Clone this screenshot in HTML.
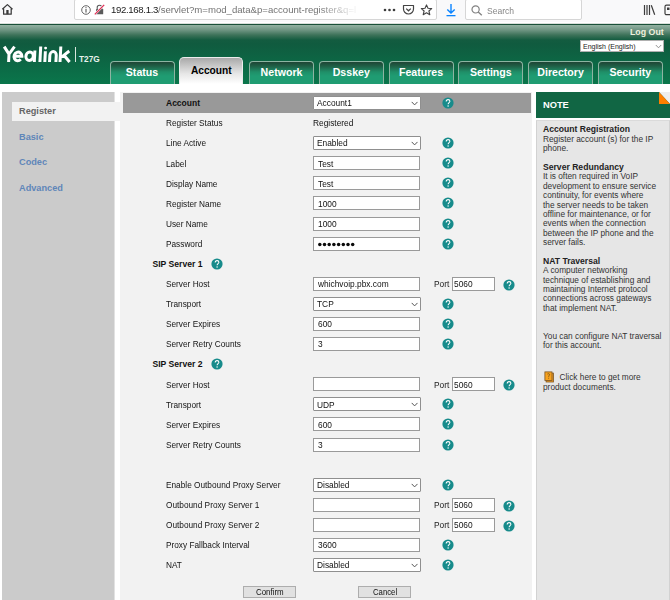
<!DOCTYPE html><html><head><meta charset="utf-8"><style>
*{box-sizing:border-box}
html,body{margin:0;padding:0}
body{width:670px;height:600px;overflow:hidden;position:relative;background:#fff;font-family:"Liberation Sans",sans-serif}
.a{position:absolute}
.t{position:absolute;white-space:nowrap;line-height:1}
.lbl{font-size:8.8px;color:#141414;transform:scaleX(0.94);transform-origin:0 0}
.inp{position:absolute;background:#fff;border:1px solid #9a9a9a;height:14px}
.sel{position:absolute;background:#fff;border:1px solid #8f8f8f;height:14px;border-radius:1px}
.it{position:absolute;white-space:nowrap;line-height:1;font-size:8.8px;color:#111;transform:scaleX(0.95);transform-origin:0 0}
.tab{position:absolute;top:61px;width:65px;height:23px;border:1px solid #8db4a2;border-bottom:none;border-radius:4px 4px 0 0;
 background:linear-gradient(#1e4535 0px,#1f5e45 4px,#1f8f68 10px,#1f9c72 14px,#1f9c72 100%)}
.tabt{position:absolute;left:0;right:0;top:5.2px;text-align:center;font-weight:bold;font-size:10.6px;color:#fff;line-height:1}
.tabt.act{font-size:10.2px}
.nt{position:absolute;left:543px;white-space:nowrap;font-size:8.3px;line-height:9.3px;color:#333}
</style></head><body><div class="a" style="left:0;top:0;width:670px;height:22px;background:#f9f9fa"></div>
<div class="a" style="left:0;top:23px;width:670px;height:1px;background:#d9dfdb"></div>
<svg class="a" style="left:0;top:0" width="16" height="18" viewBox="0 0 16 18"><path d="M2.3 9.2 L7.4 4.6 L12.5 9.2 M3.6 8 V14.2 H11.2 V8" fill="none" stroke="#3a3a3a" stroke-width="1.25" stroke-linejoin="round"/><rect x="6.3" y="10" width="2.3" height="4.2" fill="#3a3a3a"/></svg>
<div class="a" style="left:74px;top:-1px;width:363px;height:21px;background:#fff;border:1px solid #d6d6d6;border-radius:2px"></div>
<svg class="a" style="left:81px;top:5px" width="10" height="10" viewBox="0 0 10 10"><circle cx="5" cy="5" r="4.3" fill="none" stroke="#555" stroke-width="0.9"/><rect x="4.45" y="4" width="1.1" height="3.6" fill="#555"/><circle cx="5" cy="2.7" r="0.6" fill="#555"/></svg>
<svg class="a" style="left:94px;top:4px" width="11" height="11" viewBox="0 0 11 11"><path d="M3.2 5 V3.6 A2.3 2.3 0 0 1 7.8 3.6 V5" fill="none" stroke="#5a5a5a" stroke-width="1.1"/><rect x="2" y="5" width="7.2" height="5.3" rx="0.6" fill="#5a5a5a"/><path d="M0.8 10.3 L10.2 0.8" stroke="#f9f9fa" stroke-width="2.2"/><path d="M0.8 10.3 L10.2 0.8" stroke="#e22850" stroke-width="1.2"/></svg>
<div class="t" style="left:111px;top:5px;font-size:9.6px;line-height:10px;color:#1b1b1b;width:252px;overflow:hidden;-webkit-mask-image:linear-gradient(90deg,#000 205px,rgba(0,0,0,0.12) 242px,transparent 252px)"><span style="letter-spacing:-0.33px">192.168.1.3</span><span style="color:#737373">/servlet?m=mod_data&amp;p=account-register&amp;q=l</span></div>
<svg class="a" style="left:383px;top:8px" width="13" height="4" viewBox="0 0 13 4"><circle cx="2" cy="2" r="1.3" fill="#3c3c3c"/><circle cx="6.5" cy="2" r="1.3" fill="#3c3c3c"/><circle cx="11" cy="2" r="1.3" fill="#3c3c3c"/></svg>
<svg class="a" style="left:402px;top:4px" width="13" height="12" viewBox="0 0 13 12"><path d="M1.5 1.5 H11.5 V5 A5 5 0 0 1 1.5 5 Z" fill="none" stroke="#444" stroke-width="1.2" stroke-linejoin="round"/><path d="M4.2 4.6 L6.5 6.8 L8.8 4.6" fill="none" stroke="#444" stroke-width="1.2"/></svg>
<svg class="a" style="left:420px;top:4px" width="13" height="12" viewBox="0 0 13 12"><path d="M6.5 0.9 L8 4.3 L11.7 4.6 L8.9 7 L9.8 10.7 L6.5 8.7 L3.2 10.7 L4.1 7 L1.3 4.6 L5 4.3 Z" fill="none" stroke="#444" stroke-width="1.1" stroke-linejoin="round"/></svg>
<svg class="a" style="left:445px;top:3px" width="12" height="14" viewBox="0 0 12 14"><path d="M6 1 V10 M2.3 6.4 L6 10 L9.7 6.4" fill="none" stroke="#0a84ff" stroke-width="1.4"/><rect x="1.5" y="12" width="9" height="1.3" fill="#0a84ff"/></svg>
<div class="a" style="left:465px;top:-1px;width:117px;height:21px;background:#fff;border:1px solid #d6d6d6;border-radius:2px"></div>
<svg class="a" style="left:470.5px;top:5px" width="12" height="11" viewBox="0 0 12 11"><circle cx="4.6" cy="4.4" r="3.6" fill="none" stroke="#808080" stroke-width="1.2"/><path d="M7.2 7 L10.8 10.3" stroke="#808080" stroke-width="1.3"/></svg>
<div class="t" style="left:486.5px;top:6px;font-size:9.2px;line-height:10px;color:#858585;transform:scaleX(0.93);transform-origin:0 0">Search</div>
<svg class="a" style="left:643px;top:4px" width="13" height="12" viewBox="0 0 13 12"><path d="M1.5 1 V11 M4 1 V11 M6.5 1 V11 M8.3 1.2 L11.7 10.8" stroke="#3c3c3c" stroke-width="1.2" fill="none"/></svg>
<svg class="a" style="left:663px;top:4px" width="8" height="12" viewBox="0 0 8 12"><rect x="2" y="1.2" width="9" height="9.5" rx="1.5" fill="none" stroke="#3c3c3c" stroke-width="1.2"/><rect x="4" y="3.5" width="2.5" height="2.5" fill="#3c3c3c"/></svg>
<div class="a" style="left:0;top:24px;width:670px;height:60px;background:linear-gradient(#1a5038 0px,#1a5038 1px,#93b2a2 1px,#6f9583 6px,#3d7259 11px,#135c40 16px,#105b3f 20px,#0c6845 40px,#0a764b 60px)"></div>
<svg class="a" style="left:0;top:40px" width="74" height="26" viewBox="0 40 74 26"><g fill="none" stroke="#fff" stroke-width="3" transform="translate(0 62) skewX(-3) translate(0 -62)"><path d="M3.4 46.6 L8.6 54 L13.7 46.6 M8.6 53.4 V61.9" stroke-linejoin="miter"/><path d="M13.9 56.2 H21.6 A3.95 4.3 0 1 0 20.6 59.3"/><ellipse cx="29.3" cy="56.3" rx="3.7" ry="4.2"/><path d="M34.3 50.6 V61.9"/><path d="M39.9 46.4 V61.9 M44.8 51.2 V61.9 M49.5 61.9 V55.2 A3.2 3.6 0 0 1 55.9 55.2 V61.9 M60.0 46.4 V61.9 M68.7 51.0 L61.3 57.2 M63.6 55.2 L69.6 61.9"/></g><circle cx="45.6" cy="48.1" r="1.45" fill="#fff"/></svg>
<div class="a" style="left:75px;top:47px;width:1px;height:15px;background:#d8e6de"></div>
<div class="t" style="left:79px;top:55px;font-size:8.3px;font-weight:bold;color:#e8f2ec">T27G</div>
<div class="t" style="left:630px;top:28px;font-size:8.8px;font-weight:bold;color:#eef0dc">Log Out</div>
<div class="a" style="left:580px;top:40px;width:84px;height:12px;background:#fff;border:1px solid #b0b0b0"></div>
<div class="t" style="left:583px;top:43px;font-size:7px;color:#222">English (English)</div>
<svg class="a" style="left:655px;top:44px" width="7" height="5" viewBox="0 0 7 5"><path d="M0.8 1 L3.5 3.8 L6.2 1" fill="none" stroke="#888" stroke-width="0.9"/></svg>
<div class="tab" style="left:109.50px"><div class="tabt">Status</div></div>
<div class="a" style="left:179.26px;top:57px;width:64px;height:27px;border:1px solid #ececec;border-bottom:none;border-radius:5px 5px 0 0;background:linear-gradient(#a9a9a9,#e6e6e6 60%,#fff)"><div class="tabt act" style="top:8px;color:#000">Account</div></div>
<div class="tab" style="left:249.02px"><div class="tabt">Network</div></div>
<div class="tab" style="left:318.78px"><div class="tabt">Dsskey</div></div>
<div class="tab" style="left:388.54px"><div class="tabt">Features</div></div>
<div class="tab" style="left:458.30px"><div class="tabt">Settings</div></div>
<div class="tab" style="left:528.06px"><div class="tabt">Directory</div></div>
<div class="tab" style="left:597.82px"><div class="tabt">Security</div></div>
<div class="a" style="left:2px;top:92px;width:112px;height:508px;background:#cbcbcb;box-shadow:1px 0 0 #e2e2e2"></div>
<div class="a" style="left:120px;top:92px;width:412px;height:508px;background:#f2f2f2"></div>
<div class="a" style="left:12px;top:102px;width:112px;height:19px;background:#f2f2f2"></div>
<div class="t" style="left:19px;top:107px;font-size:9.2px;font-weight:bold;color:#666">Register</div>
<div class="t" style="left:19px;top:132.5px;font-size:9.2px;font-weight:bold;color:#5f86b9">Basic</div>
<div class="t" style="left:19px;top:158.0px;font-size:9.2px;font-weight:bold;color:#5f86b9">Codec</div>
<div class="t" style="left:19px;top:183.5px;font-size:9.2px;font-weight:bold;color:#5f86b9">Advanced</div>
<div class="a" style="left:123px;top:93px;width:408px;height:20px;background:#999"></div>
<div class="t" style="left:166px;top:99.25px;font-size:8.5px;font-weight:bold;color:#111">Account</div>
<div class="sel" style="left:313px;top:96px;width:108px"></div>
<div class="it" style="left:317px;top:99.25px">Account1</div>
<svg class="a" style="left:411.00px;top:101.30px" width="7" height="5" viewBox="0 0 7 5"><path d="M0.7 0.9 L3.6 3.9 L6.5 0.9" fill="none" stroke="#555" stroke-width="1"/></svg>
<svg class="a" style="left:441.60px;top:97.00px" width="12" height="12" viewBox="0 0 12 12"><circle cx="6" cy="6" r="5.6" fill="#178b8b"/><path d="M4.2 4.6 C4.2 3.4 5 2.6 6.1 2.6 C7.1 2.6 7.9 3.3 7.9 4.3 C7.9 5.6 6.1 5.7 6.1 7.3" fill="none" stroke="#fff" stroke-width="1.05"/><circle cx="6.1" cy="9" r="0.7" fill="#fff"/></svg>
<div class="t lbl" style="left:166px;top:119.34px">Register Status</div>
<div class="it" style="left:313px;top:119.34px">Registered</div>
<div class="t lbl" style="left:166px;top:139.43px">Line Active</div>
<div class="sel" style="left:313px;top:136px;width:108px"></div>
<div class="it" style="left:317px;top:139.43px">Enabled</div>
<svg class="a" style="left:411.00px;top:141.30px" width="7" height="5" viewBox="0 0 7 5"><path d="M0.7 0.9 L3.6 3.9 L6.5 0.9" fill="none" stroke="#555" stroke-width="1"/></svg>
<svg class="a" style="left:441.60px;top:137.18px" width="12" height="12" viewBox="0 0 12 12"><circle cx="6" cy="6" r="5.6" fill="#178b8b"/><path d="M4.2 4.6 C4.2 3.4 5 2.6 6.1 2.6 C7.1 2.6 7.9 3.3 7.9 4.3 C7.9 5.6 6.1 5.7 6.1 7.3" fill="none" stroke="#fff" stroke-width="1.05"/><circle cx="6.1" cy="9" r="0.7" fill="#fff"/></svg>
<div class="t lbl" style="left:166px;top:159.52px">Label</div>
<div class="inp" style="left:313px;top:156px;width:107px"></div>
<div class="it" style="left:317.5px;top:159.52px">Test</div>
<svg class="a" style="left:441.60px;top:157.27px" width="12" height="12" viewBox="0 0 12 12"><circle cx="6" cy="6" r="5.6" fill="#178b8b"/><path d="M4.2 4.6 C4.2 3.4 5 2.6 6.1 2.6 C7.1 2.6 7.9 3.3 7.9 4.3 C7.9 5.6 6.1 5.7 6.1 7.3" fill="none" stroke="#fff" stroke-width="1.05"/><circle cx="6.1" cy="9" r="0.7" fill="#fff"/></svg>
<div class="t lbl" style="left:166px;top:179.61px">Display Name</div>
<div class="inp" style="left:313px;top:176px;width:107px"></div>
<div class="it" style="left:317.5px;top:179.61px">Test</div>
<svg class="a" style="left:441.60px;top:177.36px" width="12" height="12" viewBox="0 0 12 12"><circle cx="6" cy="6" r="5.6" fill="#178b8b"/><path d="M4.2 4.6 C4.2 3.4 5 2.6 6.1 2.6 C7.1 2.6 7.9 3.3 7.9 4.3 C7.9 5.6 6.1 5.7 6.1 7.3" fill="none" stroke="#fff" stroke-width="1.05"/><circle cx="6.1" cy="9" r="0.7" fill="#fff"/></svg>
<div class="t lbl" style="left:166px;top:199.70px">Register Name</div>
<div class="inp" style="left:313px;top:196px;width:107px"></div>
<div class="it" style="left:317.5px;top:199.70px">1000</div>
<svg class="a" style="left:441.60px;top:197.45px" width="12" height="12" viewBox="0 0 12 12"><circle cx="6" cy="6" r="5.6" fill="#178b8b"/><path d="M4.2 4.6 C4.2 3.4 5 2.6 6.1 2.6 C7.1 2.6 7.9 3.3 7.9 4.3 C7.9 5.6 6.1 5.7 6.1 7.3" fill="none" stroke="#fff" stroke-width="1.05"/><circle cx="6.1" cy="9" r="0.7" fill="#fff"/></svg>
<div class="t lbl" style="left:166px;top:219.79px">User Name</div>
<div class="inp" style="left:313px;top:217px;width:107px"></div>
<div class="it" style="left:317.5px;top:219.79px">1000</div>
<svg class="a" style="left:441.60px;top:217.54px" width="12" height="12" viewBox="0 0 12 12"><circle cx="6" cy="6" r="5.6" fill="#178b8b"/><path d="M4.2 4.6 C4.2 3.4 5 2.6 6.1 2.6 C7.1 2.6 7.9 3.3 7.9 4.3 C7.9 5.6 6.1 5.7 6.1 7.3" fill="none" stroke="#fff" stroke-width="1.05"/><circle cx="6.1" cy="9" r="0.7" fill="#fff"/></svg>
<div class="t lbl" style="left:166px;top:239.88px">Password</div>
<div class="inp" style="left:313px;top:237px;width:107px"></div>
<svg class="a" style="left:317px;top:241.63px" width="40" height="5" viewBox="0 0 40 5"><circle cx="2.80" cy="2.5" r="1.75" fill="#0a0a0a"/><circle cx="7.50" cy="2.5" r="1.75" fill="#0a0a0a"/><circle cx="12.20" cy="2.5" r="1.75" fill="#0a0a0a"/><circle cx="16.90" cy="2.5" r="1.75" fill="#0a0a0a"/><circle cx="21.60" cy="2.5" r="1.75" fill="#0a0a0a"/><circle cx="26.30" cy="2.5" r="1.75" fill="#0a0a0a"/><circle cx="31.00" cy="2.5" r="1.75" fill="#0a0a0a"/><circle cx="35.70" cy="2.5" r="1.75" fill="#0a0a0a"/></svg>
<svg class="a" style="left:441.60px;top:237.63px" width="12" height="12" viewBox="0 0 12 12"><circle cx="6" cy="6" r="5.6" fill="#178b8b"/><path d="M4.2 4.6 C4.2 3.4 5 2.6 6.1 2.6 C7.1 2.6 7.9 3.3 7.9 4.3 C7.9 5.6 6.1 5.7 6.1 7.3" fill="none" stroke="#fff" stroke-width="1.05"/><circle cx="6.1" cy="9" r="0.7" fill="#fff"/></svg>
<div class="t" style="left:152.5px;top:259.97px;font-size:8.6px;font-weight:bold;color:#111">SIP Server 1</div>
<svg class="a" style="left:211.00px;top:257.52px" width="12" height="12" viewBox="0 0 12 12"><circle cx="6" cy="6" r="5.6" fill="#178b8b"/><path d="M4.2 4.6 C4.2 3.4 5 2.6 6.1 2.6 C7.1 2.6 7.9 3.3 7.9 4.3 C7.9 5.6 6.1 5.7 6.1 7.3" fill="none" stroke="#fff" stroke-width="1.05"/><circle cx="6.1" cy="9" r="0.7" fill="#fff"/></svg>
<div class="t lbl" style="left:166px;top:280.06px">Server Host</div>
<div class="inp" style="left:313px;top:277px;width:107px"></div>
<div class="it" style="left:317.5px;top:280.06px">whichvoip.pbx.com</div>
<div class="it" style="left:433.5px;top:280.06px;color:#1a1a1a">Port</div>
<div class="inp" style="left:452px;top:277px;width:43px"></div>
<div class="it" style="left:453.5px;top:280.06px">5060</div>
<svg class="a" style="left:502.50px;top:278.81px" width="12" height="12" viewBox="0 0 12 12"><circle cx="6" cy="6" r="5.6" fill="#178b8b"/><path d="M4.2 4.6 C4.2 3.4 5 2.6 6.1 2.6 C7.1 2.6 7.9 3.3 7.9 4.3 C7.9 5.6 6.1 5.7 6.1 7.3" fill="none" stroke="#fff" stroke-width="1.05"/><circle cx="6.1" cy="9" r="0.7" fill="#fff"/></svg>
<div class="t lbl" style="left:166px;top:300.15px">Transport</div>
<div class="sel" style="left:313px;top:297px;width:108px"></div>
<div class="it" style="left:317px;top:300.15px">TCP</div>
<svg class="a" style="left:411.00px;top:302.30px" width="7" height="5" viewBox="0 0 7 5"><path d="M0.7 0.9 L3.6 3.9 L6.5 0.9" fill="none" stroke="#555" stroke-width="1"/></svg>
<svg class="a" style="left:441.60px;top:297.90px" width="12" height="12" viewBox="0 0 12 12"><circle cx="6" cy="6" r="5.6" fill="#178b8b"/><path d="M4.2 4.6 C4.2 3.4 5 2.6 6.1 2.6 C7.1 2.6 7.9 3.3 7.9 4.3 C7.9 5.6 6.1 5.7 6.1 7.3" fill="none" stroke="#fff" stroke-width="1.05"/><circle cx="6.1" cy="9" r="0.7" fill="#fff"/></svg>
<div class="t lbl" style="left:166px;top:320.24px">Server Expires</div>
<div class="inp" style="left:313px;top:317px;width:107px"></div>
<div class="it" style="left:317.5px;top:320.24px">600</div>
<svg class="a" style="left:441.60px;top:317.99px" width="12" height="12" viewBox="0 0 12 12"><circle cx="6" cy="6" r="5.6" fill="#178b8b"/><path d="M4.2 4.6 C4.2 3.4 5 2.6 6.1 2.6 C7.1 2.6 7.9 3.3 7.9 4.3 C7.9 5.6 6.1 5.7 6.1 7.3" fill="none" stroke="#fff" stroke-width="1.05"/><circle cx="6.1" cy="9" r="0.7" fill="#fff"/></svg>
<div class="t lbl" style="left:166px;top:340.33px">Server Retry Counts</div>
<div class="inp" style="left:313px;top:337px;width:107px"></div>
<div class="it" style="left:317.5px;top:340.33px">3</div>
<svg class="a" style="left:441.60px;top:338.08px" width="12" height="12" viewBox="0 0 12 12"><circle cx="6" cy="6" r="5.6" fill="#178b8b"/><path d="M4.2 4.6 C4.2 3.4 5 2.6 6.1 2.6 C7.1 2.6 7.9 3.3 7.9 4.3 C7.9 5.6 6.1 5.7 6.1 7.3" fill="none" stroke="#fff" stroke-width="1.05"/><circle cx="6.1" cy="9" r="0.7" fill="#fff"/></svg>
<div class="t" style="left:152.5px;top:360.42px;font-size:8.6px;font-weight:bold;color:#111">SIP Server 2</div>
<svg class="a" style="left:211.00px;top:357.97px" width="12" height="12" viewBox="0 0 12 12"><circle cx="6" cy="6" r="5.6" fill="#178b8b"/><path d="M4.2 4.6 C4.2 3.4 5 2.6 6.1 2.6 C7.1 2.6 7.9 3.3 7.9 4.3 C7.9 5.6 6.1 5.7 6.1 7.3" fill="none" stroke="#fff" stroke-width="1.05"/><circle cx="6.1" cy="9" r="0.7" fill="#fff"/></svg>
<div class="t lbl" style="left:166px;top:380.51px">Server Host</div>
<div class="inp" style="left:313px;top:377px;width:107px"></div>
<div class="it" style="left:433.5px;top:380.51px;color:#1a1a1a">Port</div>
<div class="inp" style="left:452px;top:377px;width:43px"></div>
<div class="it" style="left:453.5px;top:380.51px">5060</div>
<svg class="a" style="left:502.50px;top:379.26px" width="12" height="12" viewBox="0 0 12 12"><circle cx="6" cy="6" r="5.6" fill="#178b8b"/><path d="M4.2 4.6 C4.2 3.4 5 2.6 6.1 2.6 C7.1 2.6 7.9 3.3 7.9 4.3 C7.9 5.6 6.1 5.7 6.1 7.3" fill="none" stroke="#fff" stroke-width="1.05"/><circle cx="6.1" cy="9" r="0.7" fill="#fff"/></svg>
<div class="t lbl" style="left:166px;top:400.60px">Transport</div>
<div class="sel" style="left:313px;top:397px;width:108px"></div>
<div class="it" style="left:317px;top:400.60px">UDP</div>
<svg class="a" style="left:411.00px;top:402.30px" width="7" height="5" viewBox="0 0 7 5"><path d="M0.7 0.9 L3.6 3.9 L6.5 0.9" fill="none" stroke="#555" stroke-width="1"/></svg>
<svg class="a" style="left:441.60px;top:398.35px" width="12" height="12" viewBox="0 0 12 12"><circle cx="6" cy="6" r="5.6" fill="#178b8b"/><path d="M4.2 4.6 C4.2 3.4 5 2.6 6.1 2.6 C7.1 2.6 7.9 3.3 7.9 4.3 C7.9 5.6 6.1 5.7 6.1 7.3" fill="none" stroke="#fff" stroke-width="1.05"/><circle cx="6.1" cy="9" r="0.7" fill="#fff"/></svg>
<div class="t lbl" style="left:166px;top:420.69px">Server Expires</div>
<div class="inp" style="left:313px;top:417px;width:107px"></div>
<div class="it" style="left:317.5px;top:420.69px">600</div>
<svg class="a" style="left:441.60px;top:418.44px" width="12" height="12" viewBox="0 0 12 12"><circle cx="6" cy="6" r="5.6" fill="#178b8b"/><path d="M4.2 4.6 C4.2 3.4 5 2.6 6.1 2.6 C7.1 2.6 7.9 3.3 7.9 4.3 C7.9 5.6 6.1 5.7 6.1 7.3" fill="none" stroke="#fff" stroke-width="1.05"/><circle cx="6.1" cy="9" r="0.7" fill="#fff"/></svg>
<div class="t lbl" style="left:166px;top:440.78px">Server Retry Counts</div>
<div class="inp" style="left:313px;top:438px;width:107px"></div>
<div class="it" style="left:317.5px;top:440.78px">3</div>
<svg class="a" style="left:441.60px;top:438.53px" width="12" height="12" viewBox="0 0 12 12"><circle cx="6" cy="6" r="5.6" fill="#178b8b"/><path d="M4.2 4.6 C4.2 3.4 5 2.6 6.1 2.6 C7.1 2.6 7.9 3.3 7.9 4.3 C7.9 5.6 6.1 5.7 6.1 7.3" fill="none" stroke="#fff" stroke-width="1.05"/><circle cx="6.1" cy="9" r="0.7" fill="#fff"/></svg>
<div class="t lbl" style="left:166px;top:480.96px">Enable Outbound Proxy Server</div>
<div class="sel" style="left:313px;top:478px;width:108px"></div>
<div class="it" style="left:317px;top:480.96px">Disabled</div>
<svg class="a" style="left:411.00px;top:483.30px" width="7" height="5" viewBox="0 0 7 5"><path d="M0.7 0.9 L3.6 3.9 L6.5 0.9" fill="none" stroke="#555" stroke-width="1"/></svg>
<svg class="a" style="left:441.60px;top:478.71px" width="12" height="12" viewBox="0 0 12 12"><circle cx="6" cy="6" r="5.6" fill="#178b8b"/><path d="M4.2 4.6 C4.2 3.4 5 2.6 6.1 2.6 C7.1 2.6 7.9 3.3 7.9 4.3 C7.9 5.6 6.1 5.7 6.1 7.3" fill="none" stroke="#fff" stroke-width="1.05"/><circle cx="6.1" cy="9" r="0.7" fill="#fff"/></svg>
<div class="t lbl" style="left:166px;top:501.05px">Outbound Proxy Server 1</div>
<div class="inp" style="left:313px;top:498px;width:107px"></div>
<div class="it" style="left:433.5px;top:501.05px;color:#1a1a1a">Port</div>
<div class="inp" style="left:452px;top:498px;width:43px"></div>
<div class="it" style="left:453.5px;top:501.05px">5060</div>
<svg class="a" style="left:502.50px;top:499.80px" width="12" height="12" viewBox="0 0 12 12"><circle cx="6" cy="6" r="5.6" fill="#178b8b"/><path d="M4.2 4.6 C4.2 3.4 5 2.6 6.1 2.6 C7.1 2.6 7.9 3.3 7.9 4.3 C7.9 5.6 6.1 5.7 6.1 7.3" fill="none" stroke="#fff" stroke-width="1.05"/><circle cx="6.1" cy="9" r="0.7" fill="#fff"/></svg>
<div class="t lbl" style="left:166px;top:521.14px">Outbound Proxy Server 2</div>
<div class="inp" style="left:313px;top:518px;width:107px"></div>
<div class="it" style="left:433.5px;top:521.14px;color:#1a1a1a">Port</div>
<div class="inp" style="left:452px;top:518px;width:43px"></div>
<div class="it" style="left:453.5px;top:521.14px">5060</div>
<svg class="a" style="left:502.50px;top:519.89px" width="12" height="12" viewBox="0 0 12 12"><circle cx="6" cy="6" r="5.6" fill="#178b8b"/><path d="M4.2 4.6 C4.2 3.4 5 2.6 6.1 2.6 C7.1 2.6 7.9 3.3 7.9 4.3 C7.9 5.6 6.1 5.7 6.1 7.3" fill="none" stroke="#fff" stroke-width="1.05"/><circle cx="6.1" cy="9" r="0.7" fill="#fff"/></svg>
<div class="t lbl" style="left:166px;top:541.23px">Proxy Fallback Interval</div>
<div class="inp" style="left:313px;top:538px;width:107px"></div>
<div class="it" style="left:317.5px;top:541.23px">3600</div>
<svg class="a" style="left:441.60px;top:538.98px" width="12" height="12" viewBox="0 0 12 12"><circle cx="6" cy="6" r="5.6" fill="#178b8b"/><path d="M4.2 4.6 C4.2 3.4 5 2.6 6.1 2.6 C7.1 2.6 7.9 3.3 7.9 4.3 C7.9 5.6 6.1 5.7 6.1 7.3" fill="none" stroke="#fff" stroke-width="1.05"/><circle cx="6.1" cy="9" r="0.7" fill="#fff"/></svg>
<div class="t lbl" style="left:166px;top:561.32px">NAT</div>
<div class="sel" style="left:313px;top:558px;width:108px"></div>
<div class="it" style="left:317px;top:561.32px">Disabled</div>
<svg class="a" style="left:411.00px;top:563.30px" width="7" height="5" viewBox="0 0 7 5"><path d="M0.7 0.9 L3.6 3.9 L6.5 0.9" fill="none" stroke="#555" stroke-width="1"/></svg>
<svg class="a" style="left:441.60px;top:559.07px" width="12" height="12" viewBox="0 0 12 12"><circle cx="6" cy="6" r="5.6" fill="#178b8b"/><path d="M4.2 4.6 C4.2 3.4 5 2.6 6.1 2.6 C7.1 2.6 7.9 3.3 7.9 4.3 C7.9 5.6 6.1 5.7 6.1 7.3" fill="none" stroke="#fff" stroke-width="1.05"/><circle cx="6.1" cy="9" r="0.7" fill="#fff"/></svg>
<div class="a" style="left:243px;top:586px;width:53px;height:12px;background:#e1e1e1;border:1px solid #adadad"></div>
<div class="t" style="left:255.5px;top:588px;font-size:8.8px;color:#111;transform:scaleX(0.9);transform-origin:0 0">Confirm</div>
<div class="a" style="left:358px;top:586px;width:53px;height:12px;background:#e1e1e1;border:1px solid #adadad"></div>
<div class="t" style="left:372.5px;top:588px;font-size:8.8px;color:#111;transform:scaleX(0.88);transform-origin:0 0">Cancel</div>
<div class="a" style="left:536px;top:92px;width:134px;height:26px;background:#116644"></div>
<svg class="a" style="left:659px;top:92px" width="11" height="12" viewBox="0 0 11 12"><path d="M0 0 L11 0 L11 12 Z" fill="#eeeeee"/><path d="M0 0 L11 12 L0 12 Z" fill="#ff7f00"/></svg>
<div class="t" style="left:543px;top:101px;font-size:9.3px;font-weight:bold;color:#fff">NOTE</div>
<div class="a" style="left:536px;top:120px;width:134px;height:480px;background:#e6e6e6;border-left:1px solid #d2d2d2;border-top:1px solid #dadada;border-right:1px solid #d2d2d2"></div>
<div class="nt" style="top:125.40px;font-weight:bold;color:#222;font-size:8.6px">Account Registration</div>
<div class="nt" style="top:134.79px">Register account (s) for the IP</div>
<div class="nt" style="top:144.18px">phone.</div>
<div class="nt" style="top:162.96px;font-weight:bold;color:#222;font-size:8.6px">Server Redundancy</div>
<div class="nt" style="top:172.35px">It is often required in VoIP</div>
<div class="nt" style="top:181.74px">development to ensure service</div>
<div class="nt" style="top:191.13px">continuity, for events where</div>
<div class="nt" style="top:200.52px">the server needs to be taken</div>
<div class="nt" style="top:209.91px">offline for maintenance, or for</div>
<div class="nt" style="top:219.30px">events when the connection</div>
<div class="nt" style="top:228.69px">between the IP phone and the</div>
<div class="nt" style="top:238.08px">server fails.</div>
<div class="nt" style="top:256.86px;font-weight:bold;color:#222;font-size:8.6px">NAT Traversal</div>
<div class="nt" style="top:266.25px">A computer networking</div>
<div class="nt" style="top:275.64px">technique of establishing and</div>
<div class="nt" style="top:285.03px">maintaining Internet protocol</div>
<div class="nt" style="top:294.42px">connections across gateways</div>
<div class="nt" style="top:303.81px">that implement NAT.</div>
<div class="nt" style="top:331.98px">You can configure NAT traversal</div>
<div class="nt" style="top:341.37px">for this account.</div>
<svg class="a" style="left:544px;top:371px" width="11" height="12" viewBox="0 0 11 12"><rect x="2.1" y="2.1" width="7.3" height="8.9" fill="#f39c1f" stroke="#7a5525" stroke-width="0.8"/><rect x="0.9" y="0.9" width="7.1" height="8.5" fill="#f7a21e" stroke="#7a5525" stroke-width="0.8"/><path d="M3.4 3.2 C3.6 2.5 5.6 2.5 5.6 3.6 C5.6 4.4 4.6 4.6 4.6 5.8 M4.6 6.8 V7.6" fill="none" stroke="#6b4a1a" stroke-width="0.8"/></svg>
<div class="nt" style="left:559.5px;top:372.7px">Click here to get more</div>
<div class="nt" style="top:383.2px">product documents.</div></body></html>
